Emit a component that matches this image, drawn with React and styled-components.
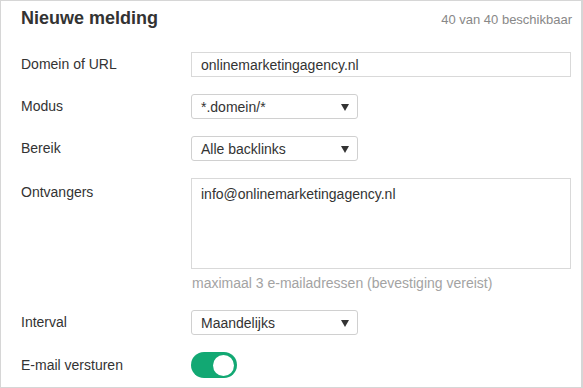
import React from 'react';
import styled, { createGlobalStyle } from 'styled-components';

const GlobalStyle = createGlobalStyle`
  html, body {
    margin: 0;
    padding: 0;
    background: #ffffff;
    font-family: "Liberation Sans", Arial, Helvetica, sans-serif;
    color: #333333;
  }
  * {
    box-sizing: border-box;
  }
`;

const Card = styled.div`
  width: 583px;
  height: 388px;
  border: 1px solid #d6d6d6;
  border-right-width: 2px;
  padding: 0 9px 0 20px;
  background: #ffffff;
  overflow: hidden;
`;

const Header = styled.div`
  display: flex;
  justify-content: space-between;
  align-items: baseline;
  padding-top: 6px;
  height: 51px;
`;

const Title = styled.h2`
  margin: 0;
  font-size: 18px;
  line-height: 22px;
  font-weight: bold;
  color: #333333;
`;

const Quota = styled.span`
  font-size: 13px;
  color: #888888;
`;

const Form = styled.div`
  display: grid;
  grid-template-columns: 170px 380px;
  row-gap: 17px;
`;

const Label = styled.div`
  font-size: 14px;
  line-height: 25px;
  color: #333333;
  padding-top: ${props => props.top ? '2px' : '0'};
  align-self: ${props => props.top ? 'start' : 'center'};
`;

const FieldCol = styled.div`
  display: flex;
  flex-direction: column;
`;

const TextInput = styled.input`
  width: 380px;
  height: 25px;
  border: 1px solid #d9d9d9;
  border-radius: 0;
  padding: 0 9px;
  font-family: inherit;
  font-size: 14px;
  color: #333333;
  outline: none;
`;

const Select = styled.div`
  width: 167px;
  height: 25px;
  border: 1px solid #d0d0d0;
  border-radius: 3px;
  padding: 0 8px 0 9px;
  display: flex;
  align-items: center;
  justify-content: space-between;
  font-size: 14px;
  color: #333333;
  background: #ffffff;
`;

const Caret = styled.span`
  width: 0;
  height: 0;
  border-left: 4px solid transparent;
  border-right: 4px solid transparent;
  border-top: 7px solid #333333;
  margin-top: 1px;
`;

const TextArea = styled.textarea`
  width: 380px;
  height: 91px;
  border: 1px solid #d9d9d9;
  border-radius: 0;
  padding: 7px 9px;
  font-family: inherit;
  font-size: 14px;
  line-height: 17px;
  color: #333333;
  resize: none;
  outline: none;
`;

const Help = styled.div`
  margin-top: 5px;
  font-size: 14px;
  line-height: 19px;
  color: #a3a3a3;
  padding-left: 1px;
`;

const Toggle = styled.div`
  width: 46px;
  height: 26px;
  border-radius: 13px;
  background: ${props => props.on ? '#12a873' : '#cccccc'};
  display: flex;
  align-items: center;
  justify-content: ${props => props.on ? 'flex-end' : 'flex-start'};
  padding: 0 3px;
`;

const Knob = styled.div`
  width: 21px;
  height: 21px;
  border-radius: 50%;
  background: #ffffff;
`;

const App = () => {
  return (
    <React.Fragment>
      <GlobalStyle />
      <Card>
        <Header>
          <Title>Nieuwe melding</Title>
          <Quota>40 van 40 beschikbaar</Quota>
        </Header>
        <Form>
          <Label>Domein of URL</Label>
          <TextInput readOnly value="onlinemarketingagency.nl" />

          <Label>Modus</Label>
          <Select>
            <span>*.domein/*</span>
            <Caret />
          </Select>

          <Label>Bereik</Label>
          <Select>
            <span>Alle backlinks</span>
            <Caret />
          </Select>

          <Label top>Ontvangers</Label>
          <FieldCol>
            <TextArea readOnly value="info@onlinemarketingagency.nl" />
            <Help>maximaal 3 e-mailadressen (bevestiging vereist)</Help>
          </FieldCol>

          <Label>Interval</Label>
          <Select>
            <span>Maandelijks</span>
            <Caret />
          </Select>

          <Label>E-mail versturen</Label>
          <Toggle on>
            <Knob />
          </Toggle>
        </Form>
      </Card>
    </React.Fragment>
  );
};

export default App;
